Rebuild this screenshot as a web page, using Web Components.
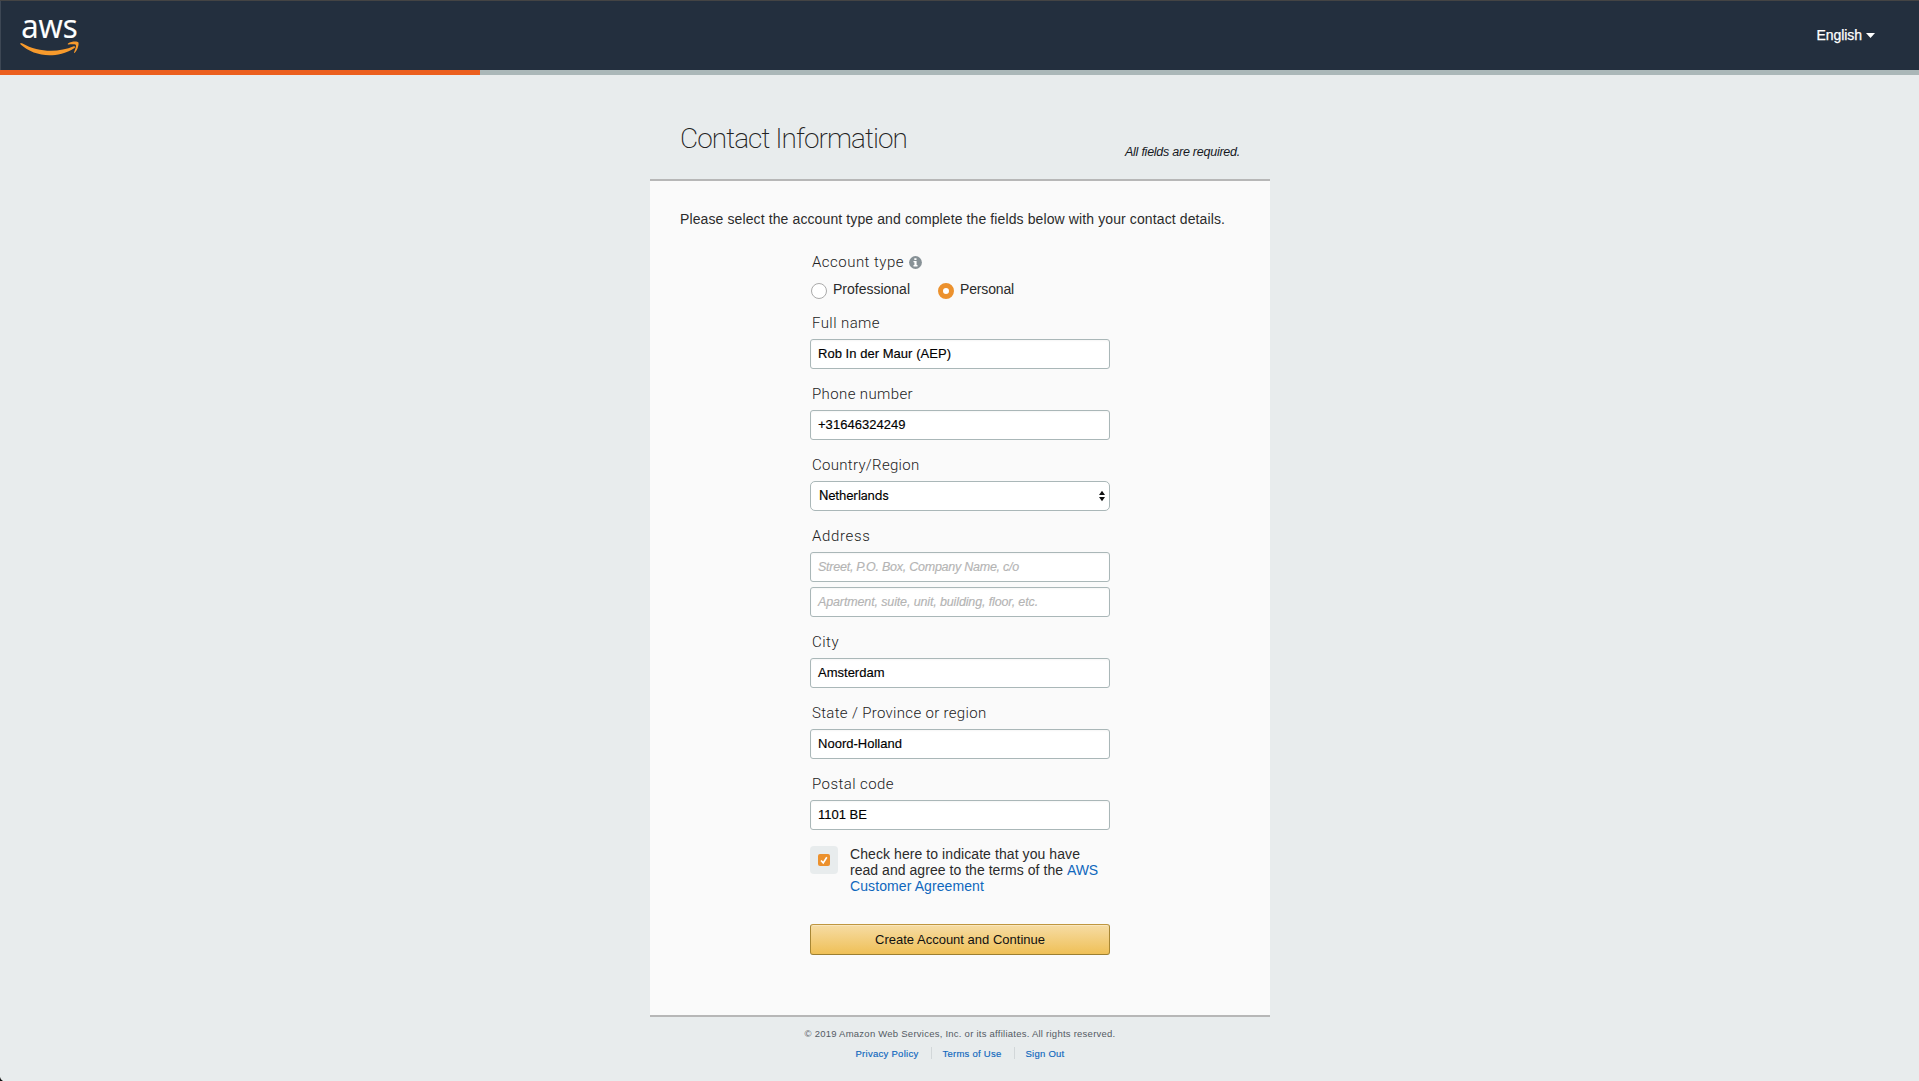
<!DOCTYPE html>
<html lang="en">
<head>
<meta charset="utf-8">
<title>AWS - Contact Information</title>
<style>
html,body{margin:0;padding:0;height:1081px;overflow:hidden;background:#e8eced}
body{font-family:"Liberation Sans",Arial,sans-serif;color:#2b2b2b}
</style>
</head>
<body>
<signup-page></signup-page>
<script>
const define = (name, html, setup) => customElements.define(name, class extends HTMLElement {
  constructor() {
    super();
    const t = document.createElement('template');
    t.innerHTML = html;
    this.attachShadow({mode: 'open'}).append(t.content.cloneNode(true));
  }
  connectedCallback() { if (setup) setup.call(this, this.shadowRoot); }
});

/* One line of text whose tracking is set so that it spans its "w" width. */
define('fit-text', `<style>:host{display:inline-block;white-space:nowrap;flex:none}span{display:inline-block}</style><span><slot></slot></span>`, function (root) {
  const w = parseFloat(this.getAttribute('w'));
  const s = root.querySelector('span');
  const natural = s.getBoundingClientRect().width;
  s.style.letterSpacing = ((w - natural) / this.textContent.length).toFixed(4) + 'px';
  this.style.width = w + 'px';
});

define('aws-logo', `<style>:host{display:block;width:62px;height:69px}svg{display:block}</style>
<svg width="62" height="69" viewBox="0 -14 62 69">
<text x="1.200" y="22.600" font-family="Open Sans, Noto Sans, sans-serif" font-weight="500" font-size="33" fill="#fff" stroke="#fff" stroke-width=".2" textLength="56.500" lengthAdjust="spacingAndGlyphs">aws</text>
<path d="M.3 28.3C.8 27.6 1.5 28 2 28.3 19 38 39 37.6 53.700 31.300 55 30.800 55.600 32 54.500 32.900 46 38.500 37 40.200 29.500 40.200 18.500 40.200 8 36 .6 29.400Z" fill="#f79a2c"/>
<path d="M48 28.400C51.500 26 57.300 26 58.300 27.200 59.200 28.600 58 34.500 54.800 37.700 54.300 38.100 53.900 37.800 54.100 37.200 55 34.800 56.500 31 55.800 30 55 29.100 51 29.400 48.700 29.500 47.900 29.600 47.400 29 48 28.400Z" fill="#f79a2c"/>
</svg>`);

define('site-header', `<style>
:host{display:block}
header{box-sizing:border-box;height:70px;background:#232f3e;border-top:1px solid #444;box-shadow:inset 1px 0 #3d4754;display:flex;justify-content:space-between;align-items:flex-start;padding:0 44px 0 20px}
.lang{display:flex;align-items:center;gap:4px;margin-top:26px;font-size:14px;line-height:16px;color:#fff;-webkit-text-stroke:.25px #fff}
.bar{height:5px;background:#aab7b8}.bar i{display:block;width:480px;height:5px;background:#eb5f1f}
</style>
<header><aws-logo></aws-logo><div class="lang"><fit-text w="45.5">English</fit-text><svg width="9" height="5" viewBox="0 0 9 5"><path d="M0 0H9L4.500 5Z" fill="#fff"/></svg></div></header>
<div class="bar"><i></i></div>`);

define('form-field', `<style>
:host{display:block;height:71px}
:host([double]){height:106px}
label{display:block;height:25px;padding-left:2px;font:300 15px/18px Roboto,"Liberation Sans",sans-serif;color:#222}
div{display:flex;flex-direction:column;gap:5px}
</style><label><slot name="label"></slot></label><div><slot></slot></div>`);

define('text-box', `<style>
:host{display:flex;justify-content:space-between;box-sizing:border-box;width:300px;height:30px;border:1px solid #aab7b8;border-radius:3px;background:#fff;box-shadow:inset 0 1px 2px rgba(0,0,0,.04);padding:6px 4px 0 7px;font-size:13px;line-height:16px;color:#000;-webkit-text-stroke:.15px}
:host([hint]){font-style:italic;color:#b4b4b4;font-size:12.500px}
:host([select]){border-radius:5px;font-family:Inter,Roboto,sans-serif;font-size:12.500px;padding-left:8px;box-shadow:none}
svg{display:none;margin-top:2px}
:host([select]) svg{display:block}
</style><slot></slot><svg width="6" height="12" viewBox="0 0 6 12"><path d="M0 5 3 .7 6 5ZM0 7 3 11.300 6 7Z" fill="#111"/></svg>`);

define('radio-option', `<style>
:host{display:flex;gap:6px;align-items:flex-start;font-size:14px;line-height:16px;color:#2b2b2b}
i{box-sizing:border-box;width:16px;height:16px;border:1px solid #aaa;border-radius:50%;background:#fff;margin-top:2px;flex:none}
:host([checked]) i{border:5px solid #ec912d}
</style><i></i><slot></slot>`);

define('agree-check', `<style>
:host{display:flex;gap:12px;height:78px}
.tile{width:28px;height:28px;border-radius:4px;background:#e8eced;display:grid;place-items:center;flex:none}
.txt{display:flex;flex-direction:column;font-size:14px;line-height:16px}
.row{display:flex}a{color:#0f67bd}
</style><div class="tile"><svg width="12" height="12" viewBox="0 0 12 12"><rect width="12" height="12" rx="2" fill="#ec912d"/><path d="M3 6.500 5.200 8.900 8.800 3.200" fill="none" stroke="#fff" stroke-width="1.600"/></svg></div>
<div class="txt"><fit-text w="230">Check here to indicate that you have</fit-text><div class="row"><fit-text w="217">read and agree to the terms of the&nbsp;</fit-text><a><fit-text w="31">AWS</fit-text></a></div><a><fit-text w="134">Customer Agreement</fit-text></a></div>`);

define('submit-button', `<style>
:host{display:block}
button{box-sizing:border-box;width:300px;height:31px;display:flex;justify-content:center;padding:7px 0 0;border:1px solid;border-color:#bf963f #a88734 #9c7e31;border-radius:3px;background:linear-gradient(#f6dca4,#efc057);box-shadow:inset 0 1px 0 #f9e6bd;font:13px/16px "Liberation Sans",Arial,sans-serif;color:#111}
</style><button><slot></slot></button>`);

define('info-icon', `<style>:host{display:block}svg{display:block}</style><svg width="13" height="13" viewBox="0 0 13 13"><circle cx="6.500" cy="6.500" r="6.400" fill="#879196"/><path d="M5.300 2.200H7.500V4H5.300ZM4.500 5H7.600V9H8.500V10.400H4.500V9H5.400V6.300H4.500Z" fill="#fff"/></svg>`);

define('site-footer', `<style>
:host{display:flex;flex-direction:column;align-items:center;font-size:9.500px;line-height:12px;color:#545b64;padding-top:11px;gap:7px}
nav{display:flex;color:#0f67bd;height:14px;line-height:14px;-webkit-text-stroke:.15px}
i{width:1px;height:12px;background:#d2d7d9;margin:0 11px 0 12px}
</style><fit-text w="311">© 2019 Amazon Web Services, Inc. or its affiliates. All rights reserved.</fit-text>
<nav><fit-text w="63">Privacy Policy</fit-text><i></i><fit-text w="59">Terms of Use</fit-text><i></i><fit-text w="39">Sign Out</fit-text></nav>`);

define('signup-page', `<style>
:host{display:block;height:1081px;background:#e8eced;position:relative}
main{width:620px;margin:0 auto 0 650px}
.head{box-sizing:border-box;height:104px;display:flex;justify-content:space-between;padding:46px 30px 0 30px;color:#333}
h1{margin:0;font:200 28px/36px Roboto,"Liberation Sans",sans-serif;color:#222}
.req{font-size:12.500px;line-height:16px;font-style:italic;color:#16191f;margin-top:23px}
.card{box-sizing:border-box;height:838px;border:solid #b7b7b7;border-width:2px 0;background:#fafafa;padding-top:30px}
.intro{padding-left:30px;font-size:14px;line-height:16px}
form{width:300px;margin-left:160px;padding-top:26px}
.acct{display:flex;gap:5px;align-items:center;padding-left:2px;height:18px;font:300 15px/18px Roboto,sans-serif;color:#222}
.radios{display:flex;gap:28px;padding:10px 0 0 1px;box-sizing:border-box;height:43px}
.corner{position:absolute;left:0;bottom:0}
</style>
<site-header></site-header>
<main>
<div class="head"><h1><fit-text w="227">Contact Information</fit-text></h1><div class="req"><fit-text w="115">All fields are required.</fit-text></div></div>
<section class="card">
<div class="intro"><fit-text w="545">Please select the account type and complete the fields below with your contact details.</fit-text></div>
<form>
<div class="acct"><fit-text w="92">Account type</fit-text><info-icon></info-icon></div>
<div class="radios"><radio-option><fit-text w="77">Professional</fit-text></radio-option><radio-option checked><fit-text w="54">Personal</fit-text></radio-option></div>
<form-field><fit-text slot="label" w="68">Full name</fit-text><text-box><fit-text w="133">Rob In der Maur (AEP)</fit-text></text-box></form-field>
<form-field><fit-text slot="label" w="101">Phone number</fit-text><text-box><fit-text w="87.5">+31646324249</fit-text></text-box></form-field>
<form-field><fit-text slot="label" w="107.5">Country/Region</fit-text><text-box select><fit-text w="69.5">Netherlands</fit-text></text-box></form-field>
<form-field double><fit-text slot="label" w="58.5">Address</fit-text><text-box hint><fit-text w="201">Street, P.O. Box, Company Name, c/o</fit-text></text-box><text-box hint><fit-text w="220">Apartment, suite, unit, building, floor, etc.</fit-text></text-box></form-field>
<form-field><fit-text slot="label" w="27">City</fit-text><text-box><fit-text w="66.5">Amsterdam</fit-text></text-box></form-field>
<form-field><fit-text slot="label" w="174.5">State / Province or region</fit-text><text-box><fit-text w="84">Noord-Holland</fit-text></text-box></form-field>
<form-field><fit-text slot="label" w="82">Postal code</fit-text><text-box><fit-text w="49">1101 BE</fit-text></text-box></form-field>
<agree-check></agree-check>
<submit-button><fit-text w="170">Create Account and Continue</fit-text></submit-button>
</form>
</section>
<site-footer></site-footer>
</main>
<svg class="corner" width="3" height="4" viewBox="0 0 3 4"><path d="M0 0 .9 2.300 3 4H0Z" fill="#111"/></svg>`);
</script>
</body>
</html>
